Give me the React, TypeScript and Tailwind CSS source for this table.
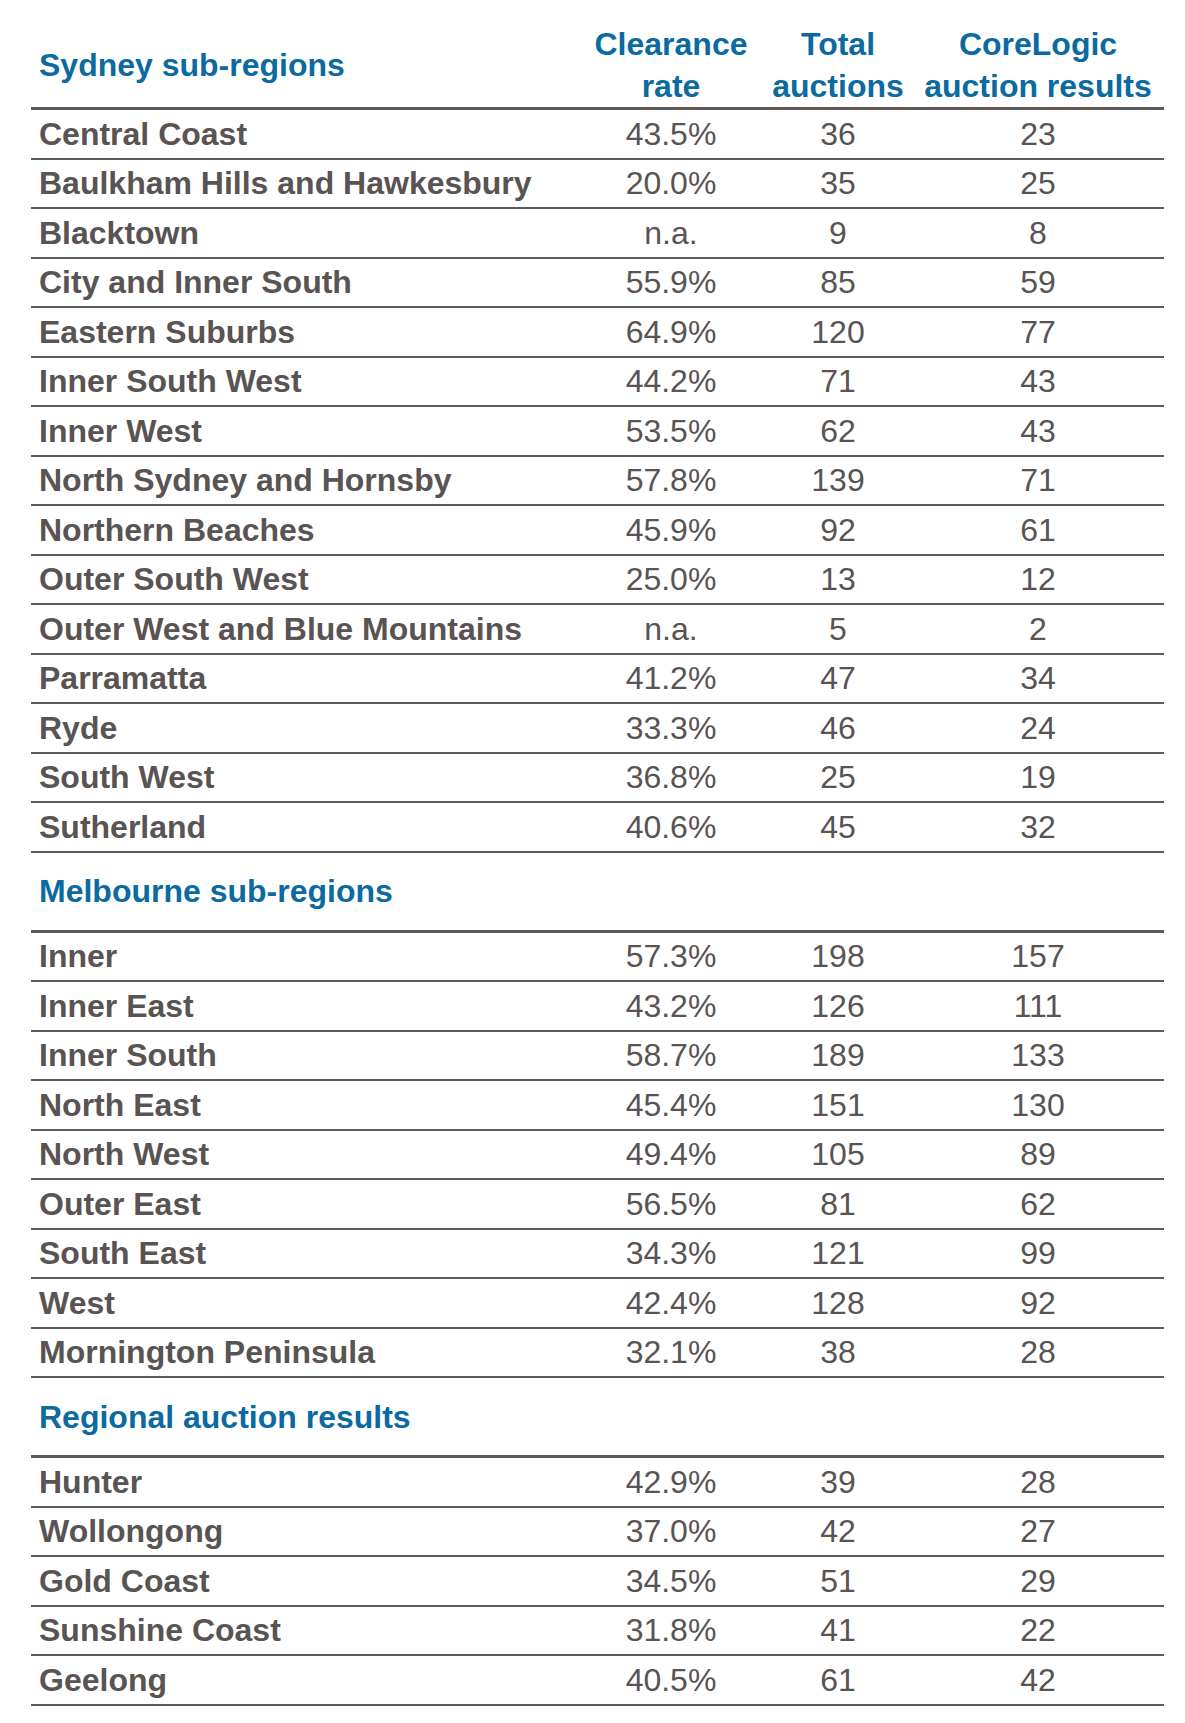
type Row = [string, string, string, string];

const sydney: Row[] = [
  ['Central Coast', '43.5%', '36', '23'],
  ['Baulkham Hills and Hawkesbury', '20.0%', '35', '25'],
  ['Blacktown', 'n.a.', '9', '8'],
  ['City and Inner South', '55.9%', '85', '59'],
  ['Eastern Suburbs', '64.9%', '120', '77'],
  ['Inner South West', '44.2%', '71', '43'],
  ['Inner West', '53.5%', '62', '43'],
  ['North Sydney and Hornsby', '57.8%', '139', '71'],
  ['Northern Beaches', '45.9%', '92', '61'],
  ['Outer South West', '25.0%', '13', '12'],
  ['Outer West and Blue Mountains', 'n.a.', '5', '2'],
  ['Parramatta', '41.2%', '47', '34'],
  ['Ryde', '33.3%', '46', '24'],
  ['South West', '36.8%', '25', '19'],
  ['Sutherland', '40.6%', '45', '32'],
];

const melbourne: Row[] = [
  ['Inner', '57.3%', '198', '157'],
  ['Inner East', '43.2%', '126', '111'],
  ['Inner South', '58.7%', '189', '133'],
  ['North East', '45.4%', '151', '130'],
  ['North West', '49.4%', '105', '89'],
  ['Outer East', '56.5%', '81', '62'],
  ['South East', '34.3%', '121', '99'],
  ['West', '42.4%', '128', '92'],
  ['Mornington Peninsula', '32.1%', '38', '28'],
];

const regional: Row[] = [
  ['Hunter', '42.9%', '39', '28'],
  ['Wollongong', '37.0%', '42', '27'],
  ['Gold Coast', '34.5%', '51', '29'],
  ['Sunshine Coast', '31.8%', '41', '22'],
  ['Geelong', '40.5%', '61', '42'],
];

const cols = 'grid grid-cols-[547px_186px_148px_252px]';

function DataRows({ rows }: { rows: Row[] }) {
  return (
    <>
      {rows.map((r) => (
        <div key={r[0]} className={`${cols} h-[49.5px] border-b-2 border-[#5e5a59] items-center text-[#595453]`}>
          <div className="pl-2 font-bold">{r[0]}</div>
          <div className="text-center">{r[1]}</div>
          <div className="text-center">{r[2]}</div>
          <div className="text-center">{r[3]}</div>
        </div>
      ))}
    </>
  );
}

function SectionTitle({ title }: { title: string }) {
  return (
    <div className="h-[80px] border-b-[3px] border-[#5e5a59] flex items-center pl-2 font-bold text-[#0b6a9f]">
      {title}
    </div>
  );
}

export default function App() {
  return (
    <div className="min-h-[1723px] bg-white" style={{ fontFamily: '"Liberation Sans", Arial, sans-serif' }}>
      <div className="ml-[31px] w-[1133px] text-[32px] leading-none">
        {/* Column headers */}
        <div className={`${cols} pt-[23px] border-b-[3px] border-[#5e5a59] text-[#0b6a9f] font-bold leading-[42px]`}>
          <div className="pl-2 self-center">Sydney sub-regions</div>
          <div className="text-center">Clearance<br />rate</div>
          <div className="text-center">Total<br />auctions</div>
          <div className="text-center">CoreLogic<br />auction results</div>
        </div>
        <DataRows rows={sydney} />

        <SectionTitle title="Melbourne sub-regions" />
        <DataRows rows={melbourne} />

        <SectionTitle title="Regional auction results" />
        <DataRows rows={regional} />
      </div>
    </div>
  );
}
